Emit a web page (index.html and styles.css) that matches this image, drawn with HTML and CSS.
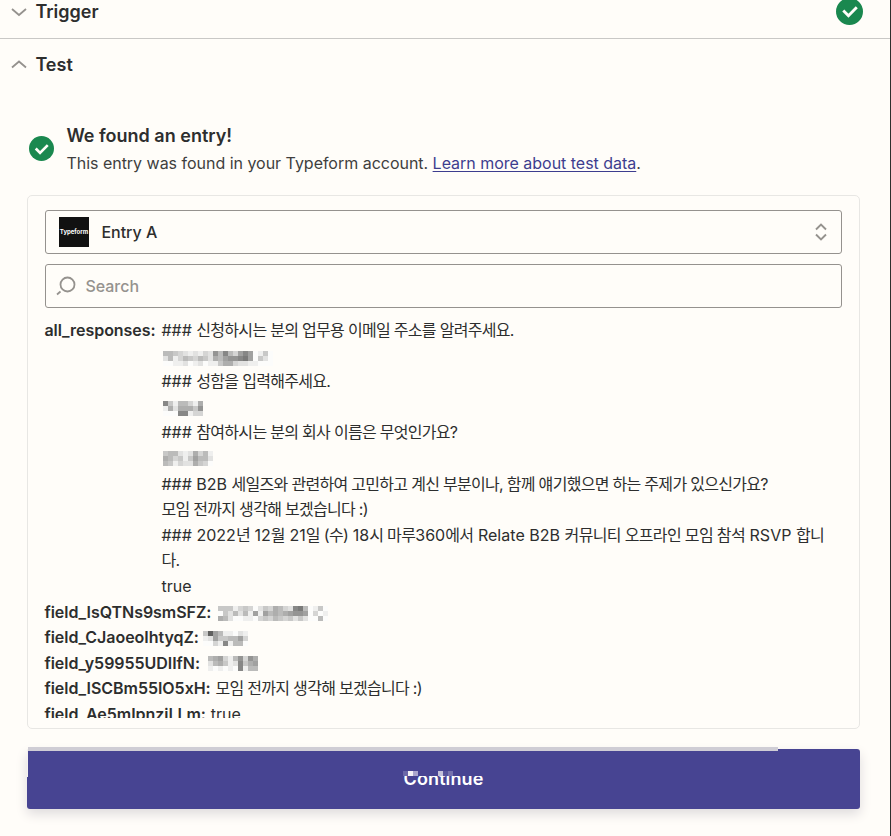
FILE: index.html
```html
<!DOCTYPE html>
<html lang="ko">
<head>
<meta charset="utf-8">
<title>Test trigger</title>
<link rel="stylesheet" href="styles.css">
</head>
<body>
<main class="panel">
  <header class="section trigger">
    <svg class="chevron" viewBox="0 0 16 10"><path d="M1 2 8 8 15 2"/></svg>
    <h2>Trigger</h2>
    <svg class="check big" viewBox="0 0 26 26"><circle cx="13" cy="13" r="13"/><path d="m7 12 5 5 8-8"/></svg>
  </header>
  <header class="section test">
    <svg class="chevron" viewBox="0 0 16 10"><path d="M1 7.500 8 1.500 15 7.500"/></svg>
    <h2>Test</h2>
  </header>
  <section class="found">
    <svg class="check" viewBox="0 0 26 26"><circle cx="13" cy="13" r="13"/><path d="m7 13 4.500 4.500 8-8"/></svg>
    <div>
      <h3>We found an entry!</h3>
      <p>This entry was found in your Typeform account. <a href="#">Learn more about test data</a>.</p>
    </div>
  </section>
  <section class="card">
    <div class="field select">
      <span class="logo">Typeform</span>
      <span class="entry">Entry A</span>
      <svg class="sort" viewBox="0 0 12 18"><path d="M1 6.500 6 1.500 11 6.500M1 11.500 6 16.500 11 11.500"/></svg>
    </div>
    <div class="field search">
      <svg class="lens" viewBox="0 0 20 20"><circle cx="11.500" cy="8.500" r="7"/><path d="M1 18.500 4.500 15.500"/></svg>
      <span>Search</span>
    </div>
    <div class="data">
      <div class="row">
        <b class="k0">all_responses:</b>
        <div class="lines">
          <div>### <span class="ko">신청하시는 분의 업무용 이메일 주소를 알려주세요.</span></div>
          <div class="blur m1" data-rows="5543212132859537970140,2513543542657889a70420,0011201201146632211000"></div>
          <div>### <span class="ko">성함을 입력해주세요.</span></div>
          <div class="blur m2" data-rows="94155316,16266648,00099133"></div>
          <div>### <span class="ko">참여하시는 분의 회사 이름은 무엇인가요?</span></div>
          <div class="blur m3" data-rows="4552126351,6534147552,5413226430"></div>
          <div>### B2B <span class="ko">세일즈와 관련하여 고민하고 계신 부분이나, 함께 얘기했으면 하는 주제가 있으신가요?</span></div>
          <div><span class="ko">모임 전까지 생각해 보겠습니다 :)</span></div>
          <div class="rsvp">### 2022<span class="ko">년</span> 12<span class="ko">월</span> 21<span class="ko">일 (수)</span> 18<span class="ko">시 마루</span>360<span class="ko">에서</span> Relate B2B <span class="ko">커뮤니티 오프라인 모임 참석</span> RSVP <span class="ko">합니</span></div>
          <div><span class="ko">다.</span></div>
          <div>true</div>
        </div>
      </div>
      <div class="row"><b class="k1">field_IsQTNs9smSFZ:</b><div class="blur g1" data-rows="4441343024365329a50140,0425251717565678870301,6520011034354342420050"></div></div>
      <div class="row"><b class="k2">field_CJaoeoIhtyqZ:</b><div class="blur g2" data-rows="4c7511021,127445573,003191550"></div></div>
      <div class="row"><b class="k3">field_y59955UDIIfN:</b><div class="blur g3" data-rows="5673158386,2564129467,1010109155"></div></div>
      <div class="row"><b class="k4">field_ISCBm55IO5xH:</b><span class="ko">모임 전까지 생각해 보겠습니다 :)</span></div>
      <div class="row"><b class="k5">field_Ae5mIpnziLLm:</b><span>true</span></div>
    </div>
  </section>
  <button class="continue">
    <span>Continue</span>
    <svg class="smear" width="80" height="9" shape-rendering="crispEdges"><path fill="#474492" d="M0 0h80v9H0z"/><path fill="#6b68a8" d="M0 4h5v5H0z"/><path fill="#f3f1f5" d="M5 4h5v5H5z"/><path fill="#aaa7cc" d="M10 4h5v5h-5z"/><path fill="#c4c1da" d="M35 4h5v5h-5z"/><path fill="#57549c" d="M40 4h5v5h-5z"/><path fill="#7673ae" d="M45 4h5v5h-5z"/></svg>
  </button>
</main>
<script src="mosaic.js"></script>
</body>
</html>
```
FILE: mosaic.js
```js
// Draws redacted values as a grid of 5px cells; each hex digit is a darkness level.
document.querySelectorAll('.blur').forEach(el => {
  const rows = el.dataset.rows.split(',');
  const w = Math.max(...rows.map(r => r.length)) * 5;
  let cells = '';
  rows.forEach((row, y) => [...row].forEach((d, x) => {
    const v = 252 - parseInt(d, 16) * 13;
    cells += `<rect x="${x * 5}" y="${y * 5}" width="5" height="5" fill="rgb(${v},${v},${v - 1})"/>`;
  }));
  el.innerHTML = `<svg width="${w}" height="15" shape-rendering="crispEdges">${cells}</svg>`;
});
```
FILE: styles.css
```css
* { box-sizing: border-box; }
body { margin: 0; height: 836px; overflow: hidden; background: #fffdf9; color: #2d2e2e; font: 16px/25.6px Inter, "Noto Sans CJK KR", sans-serif; }
svg { display: block; flex: none; fill: none; }
h2, h3, p { margin: 0; }
.panel { height: 836px; border-right: 1px solid #2d2e2e; }
.section { display: flex; align-items: center; padding: 0 27px 0 11px; }
.section h2 { font-size: 18px; font-weight: 600; margin-left: 8.4px; }
.trigger { height: 39px; padding-bottom: 15px; border-bottom: 1px solid #c9c8c6; }
.trigger .check { margin-left: auto; }
.test { height: 51px; }
.chevron { width: 16px; height: 10px; stroke: #95928e; stroke-width: 1.8; }
.check { width: 25px; height: 25px; }
.check.big { width: 27px; height: 27px; }
.check circle { fill: #1a884f; }
.check path { stroke: #fffdf9; stroke-width: 2.8; }
.found { display: flex; align-items: center; gap: 12px; margin: 33px 0 0 29.4px; height: 50px; }
.found div { padding-top: 4px; }
.found h3 { font-size: 18px; font-weight: 600; line-height: 26px; }
.found p { line-height: 28px; white-space: nowrap; color: #403f3e; letter-spacing: -.02px; }
.found a { color: #3d3d8f; text-underline-offset: 2px; }
.card { margin: 22px 30px 0 27px; height: 534px; padding: 14px 17px 10px; border: 1px solid #e8e7e4; border-radius: 5px; }
.field { display: flex; align-items: center; height: 44px; border: 1px solid #95928e; border-radius: 3px; font-weight: 500; }
.select { padding: 0 14px 0 13px; }
.logo { width: 30px; height: 30px; background: #111; color: #fff; font-size: 6px; font-weight: 700; line-height: 29px; text-align: center; }
.entry { margin-left: 12.4px; padding-top: 2px; }
.sort { width: 12px; height: 18px; margin-left: auto; stroke: #95928e; stroke-width: 1.9; }
.search { margin-top: 10px; padding-left: 10px; color: #95928e; }
.search span { padding-top: 2px; }
.lens { width: 20px; height: 20px; margin-right: 9.4px; stroke: #95928e; stroke-width: 1.8; }
.data { height: 400px; margin: 10px 0 0 -.6px; overflow: hidden; }
.row { display: flex; gap: 5px; white-space: nowrap; }
.row b { font-weight: 600; letter-spacing: -.04px; }
.k0 { width: 112px; }
.k1, .k4 { width: 166px; }
.k2 { width: 153.6px; }
.k3 { width: 158.6px; }
.lines > div { height: 25.6px; }
.ko { letter-spacing: -.7px; }
.rsvp { letter-spacing: .03px; }
.rsvp .ko { letter-spacing: -.65px; }
.blur { height: 25.6px; }
.m1 { padding: 7.4px 0 0 1.6px; }
.m2 { padding: 6.2px 0 0 1.6px; }
.m3 { padding: 5px 0 0 1.6px; }
.g1 { padding: 6.4px 0 0 2.6px; }
.g2 { padding-top: 5.8px; }
.g3 { padding-top: 5.2px; }
.continue { position: relative; display: block; width: 833px; height: 60px; margin: 20px 0 0 27px; padding: 0; border: 0; border-radius: 3px; background: #474492; color: #fff; font: 600 18px/60px Inter, sans-serif; letter-spacing: .1px; box-shadow: 0 5px 12px #dedbdc; }
/* Scroll track resting on the button's top edge. */
.continue::before { content: ""; position: absolute; left: 1px; top: -2px; width: 750px; height: 4px; background: #cfcdd5; }
/* Sliver of page colour along the upper left edge. */
.continue::after { content: ""; position: absolute; left: 0; top: 0; width: 1px; height: 28px; background: #f5f2f0; }
.smear { position: absolute; left: 376px; top: 18px; }
```
